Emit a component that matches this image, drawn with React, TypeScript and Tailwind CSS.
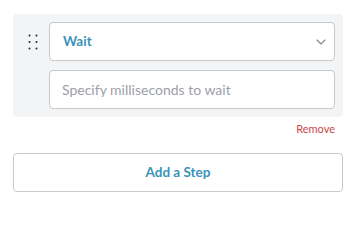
import { ChevronDown } from "lucide-react";

// drag handle: 2 columns x 3 rows of dots
function DragHandle() {
  return (
    <svg width="10" height="16" viewBox="0 0 10 16" className="text-gray-800">
      {[1.5, 8, 14.5].map((cy) =>
        [1.5, 8.5].map((cx) => (
          <circle key={`${cx}-${cy}`} cx={cx} cy={cy} r="1" fill="currentColor" />
        ))
      )}
    </svg>
  );
}

export default function App() {
  return (
    <div className="w-[356px] h-[213px] bg-white px-[13px] pt-[14px]" style={{ fontFamily: "Lato, 'Open Sans', sans-serif" }}>
      <div className="flex bg-[#f3f4f6] rounded-[4px] py-[8px] pr-[8px]">
        <div className="w-[36px] flex justify-center pt-[12px] pl-[3px]">
          <DragHandle />
        </div>
        <div className="flex-1 flex flex-col gap-[9px]">
          <div className="h-[39px] bg-white border border-[#c7c9cc] rounded-[4px] flex items-center pl-[13px] pr-[5px]">
            <span className="flex-1 text-[13.5px] font-bold text-[#3a93b8]">Wait</span>
            <ChevronDown size={16} strokeWidth={1.6} className="text-[#80858b]" />
          </div>
          <input
            className="h-[39px] bg-white border border-[#c7c9cc] rounded-[4px] pl-[12px] text-[14px] outline-none placeholder:text-[#9ca0a6]"
            placeholder="Specify milliseconds to wait"
          />
        </div>
      </div>
      <div className="flex justify-end pr-[8px] pt-[5px] h-[28px]">
        <span className="text-[11px] text-[#c7474a] leading-[14px]">Remove</span>
      </div>
      <button className="mt-[8px] w-full h-[39px] border border-[#c7c9cc] rounded-[4px] bg-white text-[13.5px] font-bold text-[#3a93b8]">
        Add a Step
      </button>
    </div>
  );
}
